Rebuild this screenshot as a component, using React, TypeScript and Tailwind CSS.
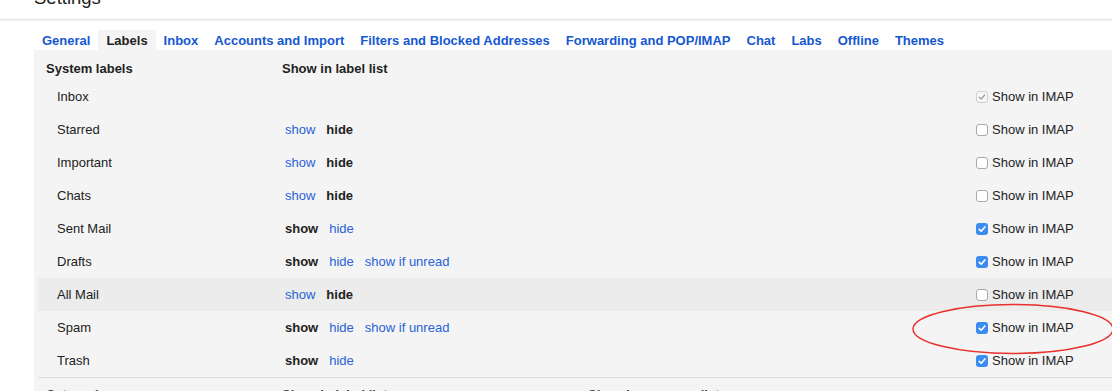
import React from "react";

type Part = { t: string; bold?: boolean };
type Row = { name: string; parts: Part[]; imap: "on" | "off" | "dis"; hl?: boolean };

const rows: Row[] = [
  { name: "Inbox", parts: [], imap: "dis" },
  { name: "Starred", parts: [{ t: "show" }, { t: "hide", bold: true }], imap: "off" },
  { name: "Important", parts: [{ t: "show" }, { t: "hide", bold: true }], imap: "off" },
  { name: "Chats", parts: [{ t: "show" }, { t: "hide", bold: true }], imap: "off" },
  { name: "Sent Mail", parts: [{ t: "show", bold: true }, { t: "hide" }], imap: "on" },
  { name: "Drafts", parts: [{ t: "show", bold: true }, { t: "hide" }, { t: "show if unread" }], imap: "on" },
  { name: "All Mail", parts: [{ t: "show" }, { t: "hide", bold: true }], imap: "off", hl: true },
  { name: "Spam", parts: [{ t: "show", bold: true }, { t: "hide" }, { t: "show if unread" }], imap: "on" },
  { name: "Trash", parts: [{ t: "show", bold: true }, { t: "hide" }], imap: "on" },
];

const tabs = [
  "General",
  "Labels",
  "Inbox",
  "Accounts and Import",
  "Filters and Blocked Addresses",
  "Forwarding and POP/IMAP",
  "Chat",
  "Labs",
  "Offline",
  "Themes",
];

function Box({ state }: { state: "on" | "off" | "dis" }) {
  if (state === "on") {
    return (
      <span className="flex h-[12px] w-[12px] items-center justify-center rounded-[3px] bg-[#3b8cf1]">
        <svg viewBox="0 0 12 12" className="h-[12px] w-[12px]">
          <path d="M3.2 6.3 L5.2 8.2 L8.9 3.9" stroke="white" strokeWidth="1.6" fill="none" strokeLinecap="round" strokeLinejoin="round" />
        </svg>
      </span>
    );
  }
  if (state === "dis") {
    return (
      <span className="flex h-[12px] w-[12px] items-center justify-center rounded-[3px] border border-[#d0d0d0] bg-[#f6f6f6]">
        <svg viewBox="0 0 10 10" className="h-[10px] w-[10px]">
          <path d="M2.4 5.3 L4.2 7 L7.6 3" stroke="#a0a0a0" strokeWidth="1.3" fill="none" strokeLinecap="round" strokeLinejoin="round" />
        </svg>
      </span>
    );
  }
  return <span className="block h-[12px] w-[12px] rounded-[3px] border border-[#a9a9a9] bg-white" />;
}

export default function App() {
  return (
    <div className="relative h-[391px] w-[1112px] overflow-hidden bg-white text-[13px] leading-[16px] text-[#222] [font-family:'Liberation_Sans',Arial,sans-serif]">
      {/* top header */}
      <div className="flex h-[20px] items-start overflow-visible border-b border-[#e3e3e3] shadow-[0_1px_2px_rgba(0,0,0,0.06)]">
        <span className="mt-[-11px] pl-[34px] text-[18.5px] leading-[18px] text-[#222]">Settings</span>
      </div>

      {/* tabs */}
      <div className="mt-[10px] flex h-[20px] pl-[34px]">
        {tabs.map((t) =>
          t === "Labels" ? (
            <div key={t} className="flex items-center bg-[#f4f4f4] px-[8px] pt-[2px] font-bold text-[#222]">
              {t}
            </div>
          ) : (
            <div key={t} className="flex items-center px-[8px] pt-[2px] font-bold text-[#1558d0]">
              {t}
            </div>
          )
        )}
      </div>

      {/* panel */}
      <div className="ml-[34px] bg-[#f4f4f4] pl-[4px]">
        <div className="flex h-[30px] items-start pt-[11px] font-bold">
          <div className="w-[244px] pl-[8px]">System labels</div>
          <div>Show in label list</div>
        </div>
        {rows.map((r) => (
          <div key={r.name} className={`flex h-[33px] items-center ${r.hl ? "bg-[#ececec]" : ""}`}>
            <div className="w-[247px] pl-[19px]">{r.name}</div>
            <div className="flex w-[691px] gap-[11px]">
              {r.parts.map((p, i) =>
                p.bold ? (
                  <span key={i} className="font-bold text-[#222]">
                    {p.t}
                  </span>
                ) : (
                  <span key={i} className="text-[#2962d6]">
                    {p.t}
                  </span>
                )
              )}
            </div>
            <div className="flex items-center gap-[4px]">
              <Box state={r.imap} />
              <span>Show in IMAP</span>
            </div>
          </div>
        ))}
        <div className="border-t border-[#dddddd]" />
        <div className="flex pt-[9px] font-bold text-[#444]">
          <div className="w-[244px] pl-[8px]">Categories</div>
          <div className="w-[306px]">Show in label list</div>
          <div>Show in message list</div>
        </div>
      </div>

      {/* red annotation ellipse */}
      <svg className="pointer-events-none absolute left-[910px] top-[302px]" width="210" height="56" viewBox="0 0 210 56">
        <ellipse cx="103" cy="27" rx="100" ry="24.5" fill="none" stroke="#e8302c" strokeWidth="1.5" />
      </svg>
    </div>
  );
}
